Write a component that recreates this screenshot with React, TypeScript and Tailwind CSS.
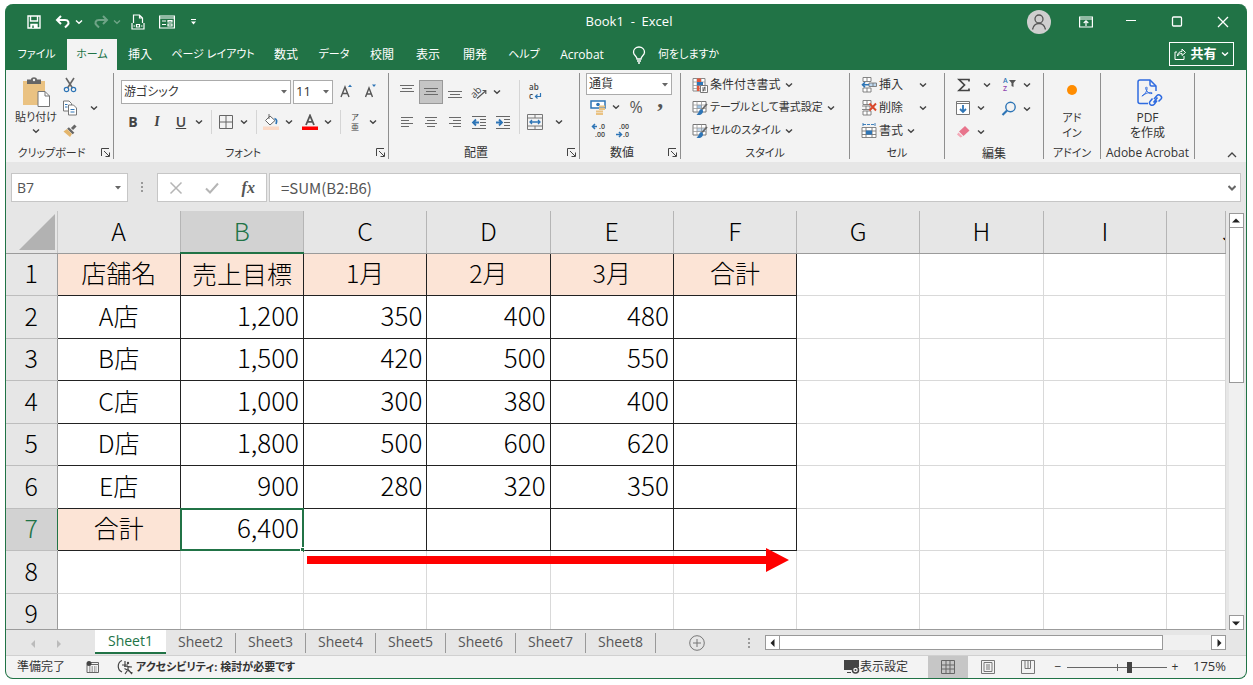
import React from 'react';

type Tone = 'dark' | 'light';

const Chevron: React.FC<{ className?: string }> = ({ className = 'text-[#444]' }) => (
    <svg viewBox="0 0 8 8" className={`w-2 h-2 shrink-0 ${className}`} fill="none" stroke="currentColor" strokeWidth="1.4">
        <path d="M1 2.5 L4 5.3 L7 2.5" />
    </svg>
);

const Caret: React.FC<{ className?: string }> = ({ className = '' }) => (
    <svg viewBox="0 0 6 4" className={`w-1.5 h-1 shrink-0 text-[#666] ${className}`} fill="currentColor">
        <path d="M0 0 H6 L3 3.5 Z" />
    </svg>
);

interface ToolProps {
    label: string;
    drop?: boolean;
    active?: boolean;
    className?: string;
    children: React.ReactNode;
}

// Icon button, optionally with a drop-down chevron on its right
const Tool: React.FC<ToolProps> = ({ label, drop, active, className = '', children }) => (
    <button
        aria-label={label}
        className={`flex h-6 shrink-0 items-center ${drop ? 'w-9' : 'w-6'} ${active ? 'bg-[#c5c5c5] border border-[#999]' : ''} ${className}`}
    >
        <span className="flex flex-1 items-center justify-center">{children}</span>
        {drop && <span className="flex w-3 justify-center"><Chevron /></span>}
    </button>
);

const Sep = () => <span className="ml-1.5 mr-0.5 h-6 w-px bg-[#d5d5d5]" />;

interface GroupProps {
    title: string;
    launcher?: boolean;
    kana?: boolean;
    className: string;
    children: React.ReactNode;
}

const Group: React.FC<GroupProps> = ({ title, launcher, kana, className, children }) => (
    <section aria-label={title} className={`flex shrink-0 flex-col border-r border-[#8f8f8f] ${className}`}>
        <div className="h-[73px]">{children}</div>
        <div className="flex h-4 items-center">
            <span className={`flex-1 whitespace-nowrap pt-1 text-center ${kana ? 'text-[11px]' : 'text-xs'}`}>{title}</span>
            {launcher && (
                <button aria-label={`${title}の設定`} className="w-4 pl-1 pt-0.5">
                    <svg viewBox="0 0 9 9" className="h-[9px] w-[9px]" fill="none" stroke="#444" strokeWidth="1">
                        <path d="M.5 8 V.5 H8 M3 3 L8 8 M8.5 4.5 V8.5 H4.5" />
                    </svg>
                </button>
            )}
        </div>
    </section>
);

const AlignIcon: React.FC<{ lines: number[][] }> = ({ lines }) => (
    <svg viewBox="0 0 16 16" className="h-4 w-4" stroke="#6a6a6a" strokeWidth="1">
        {lines.map(([x1, x2, y]) => <path key={y} d={`M${x1} ${y} H${x2}`} />)}
    </svg>
);

const IndentIcon: React.FC<{ flip?: boolean }> = ({ flip }) => (
    <svg viewBox="0 0 16 16" className="h-4 w-4" fill="none" stroke="#666" strokeWidth="1">
        <path d="M1 2.5 H15 M9 5.5 H15 M9 8.5 H15 M9 11.5 H15 M1 14.5 H15" />
        <path d={flip ? 'M1 8.5 H7 M4 5.5 L7 8.5 L4 11.5' : 'M8 8.5 H2 M5 5.5 L2 8.5 L5 11.5'} stroke="#2e75b6" strokeWidth="1.8" />
    </svg>
);

const DecimalIcon: React.FC<{ top: string; bottom: string; arrow: Tone }> = ({ top, bottom, arrow }) => (
    <svg viewBox="0 0 18 16" className="h-4 w-[18px] overflow-visible">
        <text x="16" y="6" textAnchor="end" fontSize="7" fontWeight="600" fill="#444">{top}</text>
        <text x="16" y="14" textAnchor="end" fontSize="7" fontWeight="600" fill="#444">{bottom}</text>
        <path
            d={arrow === 'dark' ? 'M8 3.5 H4 M6 1 L3.5 3.5 L6 6' : 'M3 11.5 H8 M6 9 L8.5 11.5 L6 14'}
            fill="none"
            stroke="#2e75b6"
            strokeWidth="1.5"
        />
    </svg>
);

const TableBrush: React.FC<{ header?: boolean }> = ({ header }) => (
    <svg viewBox="0 0 16 16" className="h-4 w-4" fill="none">
        <path d="M1 1.5 H14 V12 H1 Z" fill="#fff" stroke="#777" />
        {header ? <path d="M5 5 H14 V9 H5 Z" fill="#c3d9ee" /> : <path d="M5 5 H10 V9 H5 Z" fill="#9dc3e6" />}
        <path d="M1 5 H14 M1 8.5 H14 M5 1.5 V12 M9.5 1.5 V12" stroke="#999" strokeWidth=".8" />
        <path d="M15 4 L10 9.5" stroke="#666" strokeWidth="1.8" />
        <path d="M9.5 9 C6.5 9.5 7.5 13 4.5 14.5 C8 16 11.5 14 11 10.5 Z" fill="#2e75b6" />
    </svg>
);

const CondIcon = () => (
    <svg viewBox="0 0 16 16" className="h-4 w-4" fill="none">
        <path d="M1 1.5 H13 V14 H1 Z" fill="#fff" stroke="#888" />
        <path d="M1 5 H13 M1 8.5 H13 M1 11.5 H8 M5 1.5 V14 M9 1.5 V7" stroke="#999" strokeWidth=".8" />
        <path d="M5 1.5 H9 V5 H5 Z M5 8.5 H7.5 V14 H5 Z" fill="#e2573b" />
        <path d="M5 5 H11 V8.5 H5 Z" fill="#2e75b6" />
        <path d="M8.5 8.5 H15.5 V15.5 H8.5 Z" fill="#fff" stroke="#777" />
        <path d="M10 11 H14 M10 13 H14 M13 9.5 L11 14.5" stroke="#444" strokeWidth=".8" />
    </svg>
);

const CellIcon: React.FC<{ kind: 'insert' | 'delete' | 'format' }> = ({ kind }) => (
    <svg viewBox="0 0 16 16" className="h-4 w-4" fill="none" stroke="#777" strokeWidth=".9">
        {kind !== 'format' && <path d="M2 .5 H10 V4.5 H2 Z M6 .5 V4.5 M2 11 H10 V15 H2 Z M6 11 V15" fill="#fff" />}
        {kind === 'insert' && (
            <>
                <path d="M8 6 H15.5 V9.5 H8 Z M12 6 V9.5" fill="#bdd7ee" />
                <path d="M8 7.7 H1.5 M4 5.2 L1.5 7.7 L4 10.2" stroke="#2e75b6" strokeWidth="1.6" />
            </>
        )}
        {kind === 'delete' && (
            <>
                <path d="M1 6 H9 V9.5 H1 M5 6 V9.5" />
                <path d="M8.5 3.5 L15 10.5 M15 3.5 L8.5 10.5" stroke="#d9482b" strokeWidth="1.9" />
            </>
        )}
        {kind === 'format' && (
            <>
                <path d="M1 4.5 H15 V14.5 H1 Z M1 8 H15 M1 11.5 H15 M5 4.5 V14.5 M11 4.5 V14.5" fill="#fff" />
                <path d="M5 7.5 H11 V11.5 H5 Z" fill="#2e75b6" stroke="none" />
                <path d="M2 1.5 H14 M2 0 V3 M14 0 V3" stroke="#2e75b6" strokeDasharray="3 1" />
            </>
        )}
    </svg>
);

interface TextToolProps {
    icon: React.ReactNode;
    text: string;
    wide?: boolean;
    kana?: boolean;
}

const TextTool: React.FC<TextToolProps> = ({ icon, text, wide, kana }) => (
    <button className={`flex h-[23px] items-center whitespace-nowrap ${kana ? 'text-[11px]' : 'text-xs'}`}>
        {icon}
        <span className={wide ? 'w-[42px] pl-0.5 text-left' : 'pl-0.5 pr-1'}>{text}</span>
        <Chevron />
    </button>
);

const TABS = [
    { name: 'ファイル', className: 'w-[61px] text-[11px]' },
    { name: 'ホーム', className: 'w-[50px] text-[11px]' },
    { name: '挿入', className: 'w-[46px]' },
    { name: 'ページ レイアウト', className: 'w-[100px] text-[11px]' },
    { name: '数式', className: 'w-[46px]' },
    { name: 'データ', className: 'w-[50px] text-[11px]' },
    { name: '校閲', className: 'w-[46px]' },
    { name: '表示', className: 'w-[46px]' },
    { name: '開発', className: 'w-[48px]' },
    { name: 'ヘルプ', className: 'w-[50px] text-[11px]' },
    { name: 'Acrobat', className: 'w-[66px]' },
];

const TitleBar = () => (
    <header className="flex h-[35px] shrink-0 items-center text-white">
        <div className="flex flex-1 items-center pl-[21px]">
            <button aria-label="上書き保存" className="w-4">
                <svg viewBox="0 0 14 14" className="h-3.5 w-3.5" fill="none" stroke="currentColor" strokeWidth="1.4">
                    <path d="M1 1 H13 V13 H1 Z M3.5 1 V6 H10.5 V1" />
                    <path d="M4 13 V9.5 H10 V13" fill="currentColor" />
                    <path d="M6 10.5 V13" stroke="#217346" />
                </svg>
            </button>
            <button aria-label="元に戻す" className="ml-3 flex w-7 items-center gap-1">
                <svg viewBox="0 0 16 14" className="h-3.5 w-4 shrink-0" fill="none" stroke="currentColor" strokeWidth="2">
                    <path d="M6 1 L2 5 L6 9 M2 5 H10 C13.5 5 14.5 8 12.5 10 L10 12.5" />
                </svg>
                <Chevron className="text-white" />
            </button>
            <button aria-label="やり直し" className="ml-2.5 flex w-7 items-center gap-1 opacity-35">
                <svg viewBox="0 0 16 14" className="h-3.5 w-4 shrink-0" fill="none" stroke="currentColor" strokeWidth="2">
                    <path d="M10 1 L14 5 L10 9 M14 5 H6 C2.5 5 1.5 8 3.5 10 L6 12.5" />
                </svg>
                <Chevron className="text-white" />
            </button>
            <button aria-label="印刷プレビュー" className="ml-2.5 w-4">
                <svg viewBox="0 0 14 16" className="h-4 w-3.5" fill="none" stroke="currentColor" strokeWidth="1.2">
                    <path d="M2.5 9 V1 H8.5 L11.5 4 V9 M8.5 1 V4 H11.5 M1 9 V15 H13 V9" />
                    <path d="M2.5 12 H4 M10 12 H11.5 M5.5 10.5 H8.5 V13 H5.5 Z" />
                </svg>
            </button>
            <button aria-label="フォーム" className="ml-3 w-4">
                <svg viewBox="0 0 16 14" className="h-3.5 w-4" fill="none" stroke="currentColor" strokeWidth="1.2">
                    <path d="M.6 1 H15.4 V13 H.6 Z M.6 3 H15.4" />
                    <path d="M3 6 H7 M3 9.5 H7 M9 5.5 H13 V7 H9 Z M9 9 H13 V11 H9 Z" />
                </svg>
            </button>
            <button aria-label="クイック アクセス ツール バーのユーザー設定" className="ml-4 w-2">
                <svg viewBox="0 0 6 6" className="h-1.5 w-1.5" fill="currentColor">
                    <path d="M0 0 H5 V1 H0 Z M0 2.5 H5 L2.5 5.5 Z" />
                </svg>
            </button>
        </div>
        <h1 className="whitespace-pre text-[13px]">Book1  -  Excel</h1>
        <div className="flex flex-1 items-center justify-end pr-[15px]">
            <button aria-label="アカウント" className="h-6 w-6 rounded-full bg-[#cfcfcf]">
                <svg viewBox="0 0 24 24" className="h-6 w-6" fill="none" stroke="#555" strokeWidth="1.3">
                    <circle cx="12" cy="9" r="4" />
                    <path d="M5.5 19.5 C6.5 15 9 13.5 12 13.5 C15 13.5 17.5 15 18.5 19.5" />
                </svg>
            </button>
            <button aria-label="リボンの表示オプション" className="ml-7 w-3.5">
                <svg viewBox="0 0 14 12" className="h-3 w-3.5" fill="none" stroke="currentColor" strokeWidth="1.2">
                    <path d="M.6 1 H13.4 V11 H.6 Z M.6 3 H13.4 M7 10 V5 M4.7 7 L7 4.8 L9.3 7" />
                </svg>
            </button>
            <button aria-label="最小化" className="ml-8 w-3.5">
                <svg viewBox="0 0 12 12" className="h-3 w-3" stroke="currentColor" strokeWidth="1.2"><path d="M1 4.5 H11" /></svg>
            </button>
            <button aria-label="最大化" className="ml-8 w-3.5">
                <svg viewBox="0 0 12 12" className="h-3 w-3" fill="none" stroke="currentColor" strokeWidth="1.3"><rect x="1.5" y="1" width="9" height="9" rx="1" /></svg>
            </button>
            <button aria-label="閉じる" className="ml-8 w-3.5">
                <svg viewBox="0 0 12 12" className="h-3 w-3" stroke="currentColor" strokeWidth="1.3"><path d="M1 1 L11 11 M11 1 L1 11" /></svg>
            </button>
        </div>
    </header>
);

const TabBar = () => (
    <nav className="flex h-[31px] shrink-0 text-xs text-white">
        {TABS.map((tab) => (
            <button
                key={tab.name}
                className={`whitespace-nowrap ${tab.className} ${tab.name === 'ホーム' ? 'bg-[#f3f3f3] text-[#217346]' : ''}`}
            >
                {tab.name}
            </button>
        ))}
        <button className="ml-[17px] flex items-center gap-3 whitespace-nowrap text-[11px]">
            <svg viewBox="0 0 14 18" className="h-[18px] w-3.5" fill="none" stroke="currentColor" strokeWidth="1.3">
                <path d="M5 13 C5 10 1.5 9.5 1.5 6.2 C1.5 3 4 1 7 1 C10 1 12.5 3 12.5 6.2 C12.5 9.5 9 10 9 13 Z M5 15 H9 M6 17 H8" />
            </svg>
            何をしますか
        </button>
        <button className="mb-1 ml-auto mr-3 mt-[3px] flex w-[65px] items-center justify-center gap-1 border border-white text-[13px] font-bold">
            <svg viewBox="0 0 12 12" className="h-3 w-3" fill="none" stroke="currentColor" strokeWidth="1">
                <path d="M3 4 H1 V11.5 H10 V8 M3.5 8 C3.5 5 5.5 3.5 8 3.5 V1 L11.5 4.5 L8 7.5 V5.5 C6 5.5 4.5 6 3.5 8 Z" />
            </svg>
            共有
            <Chevron className="text-white" />
        </button>
    </nav>
);

const ClipboardGroup = () => (
    <Group title="クリップボード" launcher kana className="w-[108px]">
        <div className="flex h-full pl-2">
            <button className="flex w-11 flex-col items-center whitespace-nowrap pt-1 text-[11px]">
                <svg viewBox="0 0 28 30" className="h-[30px] w-7" fill="none">
                    <path d="M1 4 H23 V28 H1 Z" fill="#eac282" />
                    <path d="M5 2.5 H9 C9 -.5 15 -.5 15 2.5 H19 V7 H5 Z" fill="#666" />
                    <circle cx="12" cy="3" r="1.2" fill="#f3f3f3" />
                    <path d="M16 14.5 H23 L27.5 19 V29.5 H16 Z" fill="#fff" stroke="#777" />
                    <path d="M23 14.5 V19 H27.5" stroke="#777" />
                </svg>
                <span className="leading-5">貼り付け</span>
                <Chevron />
            </button>
            <div className="flex flex-col">
                <Tool label="切り取り">
                    <svg viewBox="0 0 14 16" className="h-4 w-3.5" fill="none">
                        <path d="M3 1 L9.5 11 M11 1 L4.5 11" stroke="#666" strokeWidth="1.6" />
                        <circle cx="3.5" cy="12.5" r="2.2" stroke="#2e75b6" strokeWidth="1.2" />
                        <circle cx="10.5" cy="12.5" r="2.2" stroke="#2e75b6" strokeWidth="1.2" />
                    </svg>
                </Tool>
                <div className="flex h-[22px] items-center">
                    <Tool label="コピー">
                        <svg viewBox="0 0 14 16" className="h-4 w-3.5" fill="#fff" stroke="#777">
                            <path d="M.5 1 H6 L8.5 3.5 V11 H.5 Z" />
                            <path d="M5.5 5 H10.5 L13.5 8 V15 H5.5 Z" />
                            <path d="M2 4.5 H4.5 M2 7 H4.5 M7.5 9.5 H11.5 M7.5 12 H11.5" stroke="#2e75b6" />
                        </svg>
                    </Tool>
                    <button aria-label="コピーのオプション" className="ml-1.5 flex w-3 justify-center"><Chevron /></button>
                </div>
                <Tool label="書式のコピー/貼り付け">
                    <svg viewBox="0 0 14 14" className="h-3.5 w-3.5">
                        <path d="M9 5 L12.5 1.5" stroke="#666" strokeWidth="3" />
                        <path d="M5 4 L10.5 9.5" stroke="#666" strokeWidth="2.4" />
                        <path d="M4 5 L9 10 L7 13 L.5 7.5 Z" fill="#e3b56c" />
                    </svg>
                </Tool>
            </div>
        </div>
    </Group>
);

const FontGroup = () => (
    <Group title="フォント" launcher kana className="w-[275px]">
        <div className="pl-[7px] pt-[7px]">
            <div className="flex items-center">
                <div className="relative w-[170px]">
                    <select aria-label="フォント名" className="block h-6 w-full appearance-none border border-[#ababab] bg-white pl-0.5 text-xs">
                        <option>游ゴシック</option>
                    </select>
                    <Caret className="pointer-events-none absolute right-1 top-2.5" />
                </div>
                <div className="relative ml-0.5 w-10">
                    <select aria-label="フォント サイズ" className="block h-6 w-full appearance-none border border-[#ababab] bg-white pl-0.5 text-[13px]">
                        <option>11</option>
                    </select>
                    <Caret className="pointer-events-none absolute right-1 top-2.5" />
                </div>
                <Tool label="フォント サイズの拡大" className="ml-0.5">
                    <svg viewBox="0 0 14 16" className="h-4 w-3.5" fill="none">
                        <path d="M1 13 L5 3 L9 13 M2.5 9.5 H7.5" stroke="#555" strokeWidth="1.4" />
                        <path d="M8 3 L10 .5 L12 3 Z" fill="#2e75b6" />
                    </svg>
                </Tool>
                <Tool label="フォント サイズの縮小">
                    <svg viewBox="0 0 14 16" className="h-4 w-3.5" fill="none">
                        <path d="M1.5 13 L5 4 L8.5 13 M2.8 10 H7.2" stroke="#555" strokeWidth="1.4" />
                        <path d="M8 .5 L10 3 L12 .5 Z" fill="#2e75b6" />
                    </svg>
                </Tool>
            </div>
            <div className="mt-1.5 flex items-center text-sm text-[#444]">
                <Tool label="太字"><b>B</b></Tool>
                <Tool label="斜体"><i className="font-serif font-semibold">I</i></Tool>
                <Tool label="下線" drop><u className="font-semibold">U</u></Tool>
                <Sep />
                <Tool label="罫線" drop>
                    <svg viewBox="0 0 14 14" className="h-3.5 w-3.5" fill="none" stroke="#666"><path d="M.5 .5 H13.5 V13.5 H.5 Z M7 0 V14 M0 7 H14" /></svg>
                </Tool>
                <Sep />
                <Tool label="塗りつぶしの色" drop>
                    <svg viewBox="0 0 16 16" className="h-4 w-4" fill="none">
                        <path d="M7 2 L12 6.5 L7 11 L2.5 6.5 Z M6 0 V5" fill="#fff" stroke="#666" />
                        <path d="M11.5 4.5 C14 5 14 7.5 13 10" stroke="#2e75b6" strokeWidth="1.7" />
                        <path d="M0 12.5 H16 V16 H0 Z" fill="#fbd9c6" />
                    </svg>
                </Tool>
                <Tool label="フォントの色" drop className="ml-[3px]">
                    <svg viewBox="0 0 16 16" className="h-4 w-4" fill="none">
                        <path d="M4 11 L8 1.5 L12 11 M5.5 7.8 H10.5" stroke="#555" strokeWidth="1.8" />
                        <path d="M0 12.5 H16 V16 H0 Z" fill="#f00" />
                    </svg>
                </Tool>
                <Sep />
                <Tool label="ふりがなの表示" drop>
                    <span className="flex flex-col text-[8px] leading-[10px]"><span>ア</span><span>亜</span></span>
                </Tool>
            </div>
        </div>
    </Group>
);

const AlignGroup = () => (
    <Group title="配置" launcher className="w-[191px]">
        <div className="flex pl-1.5 pt-[7px]">
            <div className="flex w-[120px] flex-col gap-1.5">
                <div className="flex">
                    <Tool label="上揃え"><AlignIcon lines={[[1, 15, 1.5], [3, 13, 4.5], [1, 15, 7.5]]} /></Tool>
                    <Tool label="上下中央揃え" active><AlignIcon lines={[[1, 15, 4.5], [3, 13, 7.5], [1, 15, 10.5]]} /></Tool>
                    <Tool label="下揃え"><AlignIcon lines={[[1, 15, 7.5], [3, 13, 10.5], [1, 15, 13.5]]} /></Tool>
                    <Tool label="方向" drop>
                        <svg viewBox="0 0 16 16" className="h-4 w-4 overflow-visible" fill="none" stroke="#555">
                            <text x="0" y="11" fontSize="10" fill="#444" stroke="none" transform="rotate(-45 6 9)">ab</text>
                            <path d="M6 14.5 L14.5 7 M11.5 6.5 H14.8 V10" strokeWidth="1.2" />
                        </svg>
                    </Tool>
                </div>
                <div className="flex">
                    <Tool label="左揃え"><AlignIcon lines={[[2, 14, 3.5], [2, 10, 6.5], [2, 14, 9.5], [2, 10, 12.5]]} /></Tool>
                    <Tool label="中央揃え"><AlignIcon lines={[[2, 14, 3.5], [4, 12, 6.5], [2, 14, 9.5], [4, 12, 12.5]]} /></Tool>
                    <Tool label="右揃え"><AlignIcon lines={[[2, 14, 3.5], [6, 14, 6.5], [2, 14, 9.5], [6, 14, 12.5]]} /></Tool>
                    <Tool label="インデントを減らす"><IndentIcon /></Tool>
                    <Tool label="インデントを増やす"><IndentIcon flip /></Tool>
                </div>
            </div>
            <span className="ml-1 mr-[3px] w-px bg-[#d5d5d5]" />
            <div className="flex flex-col gap-1.5">
                <Tool label="折り返して全体を表示する">
                    <svg viewBox="0 0 16 16" className="h-4 w-4 overflow-visible" fill="none">
                        <text x="2" y="6" fontSize="8" fontWeight="600" fill="#444">ab</text>
                        <text x="2" y="15" fontSize="8" fontWeight="600" fill="#444">c</text>
                        <path d="M13.5 9 V12.5 H8.5 M10.5 10.5 L8.5 12.5 L10.5 14.5" stroke="#2e75b6" strokeWidth="1.2" />
                    </svg>
                </Tool>
                <div className="flex items-center">
                    <Tool label="セルを結合して中央揃え">
                        <svg viewBox="0 0 16 16" className="h-4 w-4" fill="none" stroke="#777">
                            <path d="M.5 .5 H15.5 V15.5 H.5 Z M.5 4 H15.5 M.5 12 H15.5 M8 .5 V4 M8 12 V15.5" />
                            <path d="M3 8 H13 M5 6 L3 8 L5 10 M11 6 L13 8 L11 10" stroke="#2e75b6" strokeWidth="1.3" />
                        </svg>
                    </Tool>
                    <button aria-label="結合のオプション" className="ml-1.5 flex w-3 justify-center"><Chevron /></button>
                </div>
            </div>
        </div>
    </Group>
);

const NumberGroup = () => (
    <Group title="数値" launcher className="w-[101px]">
        <div className="pl-1.5">
            <div className="relative w-[86px]">
                <select aria-label="表示形式" className="block h-[22px] w-full appearance-none border border-[#ababab] bg-white pl-0.5 text-xs">
                    <option>通貨</option>
                </select>
                <Caret className="pointer-events-none absolute right-1 top-2.5" />
            </div>
            <div className="flex items-center text-[#555]">
                <Tool label="通貨表示形式" drop>
                    <svg viewBox="0 0 16 16" className="h-4 w-4" fill="none">
                        <path d="M1 2 H15 V9 H1 Z" fill="#fff" stroke="#2e75b6" strokeWidth="1.5" />
                        <circle cx="8" cy="5.5" r="1.8" fill="#2e75b6" />
                        <path d="M9 7.5 H15 M9 10 H15 M6 12.5 H13 M6 15 H13" stroke="#eac282" strokeWidth="1.8" />
                    </svg>
                </Tool>
                <Tool label="パーセント スタイル" className="ml-0.5 text-base">%</Tool>
                <Tool label="桁区切りスタイル" className="font-[Liberation_Serif] text-2xl font-bold"><span className="pt-2 leading-6">’</span></Tool>
            </div>
            <div className="flex">
                <Tool label="小数点以下の表示桁数を増やす"><DecimalIcon top=".0" bottom=".00" arrow="dark" /></Tool>
                <Tool label="小数点以下の表示桁数を減らす"><DecimalIcon top=".00" bottom=".0" arrow="light" /></Tool>
            </div>
        </div>
    </Group>
);

const StyleGroup = () => (
    <Group title="スタイル" kana className="w-[169px]">
        <div className="flex flex-col items-start pl-[11px]">
            <TextTool icon={<CondIcon />} text="条件付き書式" />
            <TextTool icon={<TableBrush />} text="テーブルとして書式設定" kana />
            <TextTool icon={<TableBrush header />} text="セルのスタイル" kana />
        </div>
    </Group>
);

const CellGroup = () => (
    <Group title="セル" kana className="w-[95px]">
        <div className="flex flex-col items-start pl-[11px]">
            <TextTool icon={<CellIcon kind="insert" />} text="挿入" wide />
            <TextTool icon={<CellIcon kind="delete" />} text="削除" wide />
            <TextTool icon={<CellIcon kind="format" />} text="書式" />
        </div>
    </Group>
);

const EditGroup = () => (
    <Group title="編集" className="w-[99px]">
        <div className="flex gap-1.5 pl-1.5">
            <div className="flex w-10 flex-col">
                <button aria-label="オート SUM" className="flex h-[23px] items-center justify-between pl-1.5">
                    <svg viewBox="0 0 14 14" className="h-3.5 w-3.5" fill="none" stroke="#444" strokeWidth="1.7"><path d="M12 3.5 V1.5 H2 L7.5 7 L2 12.5 H12 V10.5" /></svg>
                    <Chevron />
                </button>
                <Tool label="フィル" drop>
                    <svg viewBox="0 0 14 14" className="h-3.5 w-3.5" fill="#fff" stroke="#777">
                        <path d="M.5 .5 H13.5 V13.5 H.5 Z M.5 2.5 H13.5" />
                        <path d="M7 4 V11 M4 8 L7 11 L10 8" fill="none" stroke="#2e75b6" strokeWidth="1.8" />
                    </svg>
                </Tool>
                <Tool label="クリア" drop>
                    <svg viewBox="0 0 14 14" className="h-3.5 w-3.5">
                        <path d="M9 1 L13.5 5.500 L7.5 11 L3 6.500 Z" fill="#e8748c" />
                        <path d="M2.5 7.5 L6.5 11.5 L4.5 12.5 L1 9.5 Z" fill="#f4a9b8" />
                    </svg>
                </Tool>
            </div>
            <div className="flex flex-col">
                <Tool label="並べ替えとフィルター" drop>
                    <svg viewBox="0 0 16 16" className="h-4 w-4 overflow-visible">
                        <text x="2" y="6" fontSize="7" fontWeight="600" fill="#2e75b6">A</text>
                        <text x="2" y="14" fontSize="7" fontWeight="600" fill="#8e44ad">Z</text>
                        <path d="M8 3 H15 L12.5 6 V10 L10.5 9 V6 Z" fill="#555" />
                    </svg>
                </Tool>
                <Tool label="検索と選択" drop>
                    <svg viewBox="0 0 16 16" className="h-4 w-4" fill="none" stroke="#2e75b6">
                        <circle cx="9.5" cy="6" r="4.7" strokeWidth="1.4" />
                        <path d="M6 9.5 L1.5 14" strokeWidth="2.2" />
                    </svg>
                </Tool>
            </div>
        </div>
    </Group>
);

const Ribbon = () => (
    <div className="flex h-[92px] shrink-0 bg-[#f3f3f3] pb-[3px] pt-[3px] text-[#333]">
        <ClipboardGroup />
        <FontGroup />
        <AlignGroup />
        <NumberGroup />
        <StyleGroup />
        <CellGroup />
        <EditGroup />
        <Group title="アドイン" kana className="w-[57px]">
            <button className="flex w-full flex-col items-center text-[11px] leading-[15px]">
                <span className="mb-[15px] mt-3 h-2.5 w-2.5 rounded-full bg-[#ff8c00]" />
                <span>アド</span>
                <span>イン</span>
            </button>
        </Group>
        <Group title="Adobe Acrobat" className="w-[94px]">
            <button className="flex w-full flex-col items-center text-xs leading-[15px]">
                <svg viewBox="0 0 26 30" className="mb-[2px] mt-[5px] ml-1 h-[30px] w-[26px]" fill="none" stroke="#2f6be0" strokeWidth="1.5">
                    <path d="M11 25.5 H3 C1.5 25.5 1 24.5 1 23.5 V4 C1 2.5 2 2 3 2 H13 L19 8 V13" />
                    <path d="M13 2 V6.5 C13 7.5 13.5 8 14.5 8 H19" />
                    <path d="M5 18 C8 16.5 10.5 12.5 10 9.5 C9 8 8 10 9.5 12.5 C11 15 13 16 15 15.5 C16 14 12 14 8 16 C6 17 4.5 18.5 5 18 Z" strokeWidth="1" />
                    <path d="M17 21 L20 17.5 C22 15.5 26 18.5 24 21 L21.5 23.5 M20 22.5 L17.5 26 C15 29 11 26 13 23.5 L15.5 20.5 M16.5 24.5 L20.5 19.5" />
                </svg>
                <span>PDF</span>
                <span>を作成</span>
            </button>
        </Group>
        <div className="flex flex-1 items-end justify-end pr-[9px]">
            <button aria-label="リボンを折りたたむ" className="h-2 w-2.5">
                <svg viewBox="0 0 10 8" className="h-2 w-2.5" fill="none" stroke="#444" strokeWidth="1.3"><path d="M1 6 L5 2 L9 6" /></svg>
            </button>
        </div>
    </div>
);

const Dots = () => (
    <svg viewBox="0 0 3 11" className="h-[11px] w-[3px] shrink-0" fill="#999">
        <path d="M0 0 H2 V2 H0 Z M0 4 H2 V6 H0 Z M0 8 H2 V10 H0 Z" />
    </svg>
);

const FormulaBar = () => (
    <div className="flex h-[49px] shrink-0 items-start bg-[#e6e6e6] px-[5px] pt-[11px] text-sm text-[#555]">
        <div className="flex h-[29px] w-[117px] items-center border border-[#c6c6c6] bg-white pr-1.5">
            <input aria-label="名前ボックス" defaultValue="B7" className="w-0 flex-1 pl-[5px] outline-none" />
            <button aria-label="名前の一覧"><Caret /></button>
        </div>
        <span className="flex h-7 w-[29px] items-center justify-center"><Dots /></span>
        <div className="flex h-[29px] w-[110px] items-center justify-around border border-[#c6c6c6] bg-white">
            <button aria-label="キャンセル">
                <svg viewBox="0 0 14 14" className="h-3.5 w-3.5" stroke="#b5b5b5" strokeWidth="1.5"><path d="M1.5 1.5 L12.5 12.5 M12.5 1.5 L1.5 12.5" /></svg>
            </button>
            <button aria-label="入力">
                <svg viewBox="0 0 14 14" className="h-3.5 w-3.5" fill="none" stroke="#b5b5b5" strokeWidth="2"><path d="M1 7.5 L5 11.5 L13 2.5" /></svg>
            </button>
            <button aria-label="関数の挿入" className="font-[Liberation_Serif] text-base font-bold italic">fx</button>
        </div>
        <div className="ml-0.5 flex h-[29px] flex-1 items-center border border-[#c6c6c6] bg-white pr-1">
            <input aria-label="数式バー" defaultValue="=SUM(B2:B6)" className="min-w-0 flex-1 pl-[11px] font-[Noto_Sans_CJK_JP] text-[15px] outline-none [font-feature-settings:normal]" />
            <button aria-label="数式バーの展開">
                <svg viewBox="0 0 8 8" className="h-2 w-2" fill="none" stroke="#666" strokeWidth="2"><path d="M.5 2 L4 5.5 L7.5 2" /></svg>
            </button>
        </div>
    </div>
);

const COLUMNS = ['A', 'B', 'C', 'D', 'E', 'F', 'G', 'H', 'I', 'J'];

const ROWS: string[][] = [
    ['店舗名', '売上目標', '1月', '2月', '3月', '合計'],
    ['A店', '1,200', '350', '400', '480', ''],
    ['B店', '1,500', '420', '500', '550', ''],
    ['C店', '1,000', '300', '380', '400', ''],
    ['D店', '1,800', '500', '600', '620', ''],
    ['E店', '900', '280', '320', '350', ''],
    ['合計', '6,400', '', '', '', ''],
    [],
    [],
];

const cellClass = (r: number, c: number) => {
    const inTable = r < 7 && c < 6;
    const filled = r === 0 ? c < 6 : r === 6 && c === 0;
    const align = r === 0 || c === 0 ? 'text-center' : 'pr-[4px] text-right text-[26px]';
    return `border-b border-r ${inTable ? 'border-[#222]' : 'border-[#d9d9d9]'} ${filled ? 'bg-[#fce4d6]' : 'bg-white'} ${align}`;
};

const Grid = () => (
    <div className="relative min-w-0 flex-1 overflow-hidden border-b border-[#9b9b9b] font-[Noto_Sans_CJK_JP] [font-feature-settings:normal]">
        <table className="h-[425px] w-full table-fixed border-collapse border-r border-[#9b9b9b] text-[25px] font-light leading-8 text-black">
            <thead>
                <tr className="h-[42px] bg-[#e6e6e6]">
                    <th className="w-[51px] border-b border-r border-b-[#9b9b9b] border-r-[#c6c6c6] p-0 pr-0.5">
                        <button aria-label="すべて選択" className="flex w-full justify-end">
                            <svg viewBox="0 0 36 36" className="h-9 w-9" fill="#b2b2b2"><path d="M36 0 V36 H0 Z" /></svg>
                        </button>
                    </th>
                    {COLUMNS.map((col) => (
                        <th
                            key={col}
                            scope="col"
                            className={`overflow-hidden border-r border-r-[#b5b5b5] p-0 pb-1 font-light ${col === 'J' ? 'w-[59px] pl-[55px] text-left' : ''} ${col === 'B' ? 'border-b-2 border-b-[#217346] bg-[#d2d2d2] text-[#217346]' : 'border-b border-b-[#9b9b9b]'}`}
                        >
                            {col}
                        </th>
                    ))}
                </tr>
            </thead>
            <tbody>
                {ROWS.map((row, r) => (
                    <tr key={r} className="h-[42px]">
                        <th
                            scope="row"
                            className={`border-b border-r border-b-[#bdbdbd] p-0 pb-1 font-light ${r === 6 ? 'border-r-[#217346] bg-[#d2d2d2] text-[#217346]' : 'border-r-[#9b9b9b] bg-[#e6e6e6]'}`}
                        >
                            {r + 1}
                        </th>
                        {COLUMNS.map((col, c) => (
                            <td key={col} className={`relative whitespace-nowrap p-0 pb-1 ${cellClass(r, c)}`}>
                                {row[c]}
                                {r === 6 && c === 1 && (
                                    <span className="pointer-events-none absolute -inset-px border-2 border-[#217346]">
                                        <span className="absolute -bottom-[3px] -right-[3px] h-[5px] w-[5px] border-l border-t border-white bg-[#217346]" />
                                    </span>
                                )}
                            </td>
                        ))}
                    </tr>
                ))}
            </tbody>
        </table>
        <svg viewBox="0 0 482 24" className="pointer-events-none absolute left-[301px] top-[337px] h-6 w-[482px]" fill="#f00">
            <path d="M0 8 H459 V0 L482 12 L459 24 V16 H0 Z" />
        </svg>
    </div>
);

const ScrollArrow: React.FC<{ label: string; d: string }> = ({ label, d }) => (
    <button aria-label={label} className="flex h-[15px] w-[15px] shrink-0 items-center justify-center border border-[#999] bg-white">
        <svg viewBox="0 0 8 8" className="h-2 w-2" fill="#222"><path d={d} /></svg>
    </button>
);

const SheetBar = () => (
    <div className="flex h-[26px] shrink-0 items-start border-b border-[#d0d0d0] bg-[#e6e6e6] text-sm text-[#555]">
        <div className="flex h-[23px] w-[89px] items-center gap-5 pl-6 pt-1">
            <button aria-label="前のシート"><svg viewBox="0 0 6 8" className="h-2 w-1.5" fill="#bbb"><path d="M5 0 V8 L1 4 Z" /></svg></button>
            <button aria-label="次のシート"><svg viewBox="0 0 6 8" className="h-2 w-1.5" fill="#bbb"><path d="M1 0 V8 L5 4 Z" /></svg></button>
        </div>
        <button className="h-6 w-[71px] border-b-2 border-[#217346] bg-white leading-5 text-[#217346]">Sheet1</button>
        {['Sheet2', 'Sheet3', 'Sheet4', 'Sheet5', 'Sheet6', 'Sheet7', 'Sheet8'].map((sheet) => (
            <button key={sheet} className="mt-[3px] h-[20px] w-[70px] border-r border-[#999] pb-0.5 leading-4">{sheet}</button>
        ))}
        <button aria-label="新しいシート" className="ml-[33px] mt-[5px]">
            <svg viewBox="0 0 16 16" className="h-4 w-4" fill="none" stroke="#777"><circle cx="8" cy="8" r="7.3" /><path d="M8 4 V12 M4 8 H12" /></svg>
        </button>
        <span className="ml-[43px] mt-2"><Dots /></span>
        <div className="ml-3.5 mr-5 mt-[5px] flex flex-1 bg-[#f0f0f0]">
            <ScrollArrow label="左へスクロール" d="M5.5 0 V8 L1.5 4 Z" />
            <div className="-ml-px mr-12 h-[15px] flex-1 border border-[#999] bg-white" />
            <ScrollArrow label="右へスクロール" d="M2.5 0 V8 L6.5 4 Z" />
        </div>
    </div>
);

const StatusBar = () => (
    <footer className="flex h-[22px] shrink-0 items-center bg-[#f3f3f3] pl-[11px] pr-5 text-xs text-[#333]">
        <span>準備完了</span>
        <button aria-label="マクロの記録" className="ml-[21px]">
            <svg viewBox="0 0 13 12" className="h-3 w-[13px]" fill="none" stroke="#666">
                <path d="M1 3.5 H12.5 V11.5 H1 Z M5 1.5 H12.5 V3.5" />
                <path d="M3 6 H11 M3 8 H11 M3 10 H11" strokeDasharray="1.5 1" />
                <circle cx="3" cy="2.5" r="2.5" fill="#444" stroke="none" />
            </svg>
        </button>
        <button className="ml-[18px] flex items-center whitespace-nowrap text-[11px] font-bold">
            <svg viewBox="0 0 17 16" className="mr-0.5 h-4 w-[17px]" fill="none" stroke="#444" strokeWidth="1.2">
                <path d="M5 1.5 C0 3.5 0 11 5 13 M8 2 V8 M5 6 H11" />
                <circle cx="11" cy="4" r="1.2" fill="#444" stroke="none" />
                <path d="M7 7 L15 8 M11 7.5 V10.5 L8 15 M11 10.5 L15 15 M7.5 9.5 L15.5 14" />
            </svg>
            アクセシビリティ: 検討が必要です
        </button>
        <button className="ml-auto flex items-center whitespace-nowrap">
            <svg viewBox="0 0 16 14" className="h-3.5 w-4" fill="#444">
                <path d="M0 0 H15 V7 L8 10 H0 Z M3 12 H7 V13 H3 Z" />
                <circle cx="11.5" cy="10" r="3" fill="#f3f3f3" stroke="#444" strokeWidth="1.5" />
                <circle cx="11.5" cy="10" r="1" />
            </svg>
            表示設定
        </button>
        <div className="ml-5 flex h-full">
            <button aria-label="標準" className="flex w-10 items-center justify-center bg-[#c6c6c6]">
                <svg viewBox="0 0 14 14" className="h-3.5 w-3.5" fill="none" stroke="#666"><path d="M.5 .5 H13.5 V13.5 H.5 Z M.5 5 H13.5 M.5 9 H13.5 M5 .5 V13.5 M9 .5 V13.5" /></svg>
            </button>
            <button aria-label="ページ レイアウト" className="flex w-10 items-center justify-center">
                <svg viewBox="0 0 14 14" className="h-3.5 w-3.5" fill="none" stroke="#777"><path d="M.5 .5 H13.5 V13.5 H.5 Z M3 2.5 H11 V11.5 H3 Z M5 5 H9 M5 7 H9 M5 9 H9" /></svg>
            </button>
            <button aria-label="改ページ プレビュー" className="flex w-10 items-center justify-center">
                <svg viewBox="0 0 14 14" className="h-3.5 w-3.5" fill="none" stroke="#777"><path d="M.5 .5 H13.5 V13.5 H.5 Z M4 .5 V8.5 H9.5 V.5 M7 .5 V8.5" /></svg>
            </button>
        </div>
        <button aria-label="縮小" className="ml-0.5 w-4 text-center">−</button>
        <div className="relative ml-px flex w-[100px] items-center">
            <span className="absolute left-1/2 h-[7px] w-px bg-[#666]" />
            <input
                type="range"
                aria-label="ズーム"
                min="0"
                max="100"
                defaultValue="63"
                className="relative h-[11px] w-full appearance-none bg-transparent [&::-webkit-slider-runnable-track]:h-px [&::-webkit-slider-runnable-track]:bg-[#666] [&::-webkit-slider-thumb]:-mt-[5px] [&::-webkit-slider-thumb]:h-[11px] [&::-webkit-slider-thumb]:w-[5px] [&::-webkit-slider-thumb]:appearance-none [&::-webkit-slider-thumb]:bg-[#444]"
            />
        </div>
        <button aria-label="拡大" className="w-4 text-center">+</button>
        <span className="ml-[9px] w-[34px] text-right text-[13px]">175%</span>
    </footer>
);

const App: React.FC = () => (
    <div className="h-screen bg-white pb-[6px] pl-[5px] pr-[6px] pt-1 font-['Open_Sans','Noto_Sans_CJK_JP',sans-serif] [font-feature-settings:'palt']">
        <div className="flex h-full flex-col overflow-hidden rounded-lg border border-t-0 border-[#217346] bg-[#217346]">
            <TitleBar />
            <TabBar />
            <Ribbon />
            <FormulaBar />
            <main className="flex min-h-0 flex-1 bg-[#e6e6e6]">
                <Grid />
                <div className="flex w-5 flex-col items-center pt-0.5">
                    <ScrollArrow label="上へスクロール" d="M0 5.5 H8 L4 1.5 Z" />
                    <div className="h-[155px] w-[15px] border border-t-0 border-[#999] bg-white" />
                    <div className="w-[15px] flex-1 bg-[#f0f0f0]" />
                    <ScrollArrow label="下へスクロール" d="M0 2.5 H8 L4 6.5 Z" />
                </div>
            </main>
            <SheetBar />
            <StatusBar />
        </div>
    </div>
);

export default App;
